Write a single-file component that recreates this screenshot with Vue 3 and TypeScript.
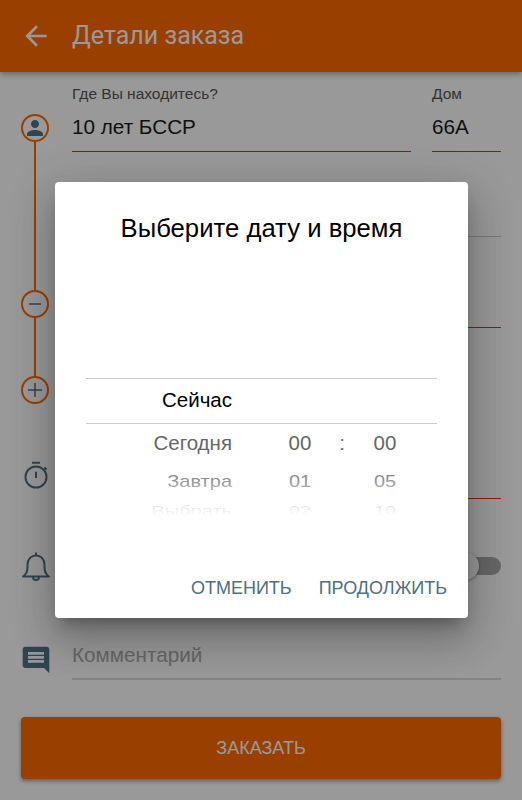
<template>
  <div class="page">
    <header class="app-bar">
      <svg class="back" viewBox="0 0 24 24" width="32" height="32">
        <path d="M20 11H7.830l5.590-5.590L12 4l-8 8 8 8 1.410-1.410L7.830 13H20z" fill="#fff" />
      </svg>
      <span class="bar-title">Детали заказа</span>
    </header>

    <section class="route">
      <div class="route-line">
        <span class="stop">
          <svg viewBox="0 0 24 24" width="24" height="24">
            <path d="M12 12c2.200 0 4-1.800 4-4s-1.800-4-4-4-4 1.800-4 4 1.800 4 4 4zm0 2c-2.700 0-8 1.300-8 4v2h16v-2c0-2.700-5.300-4-8-4z" fill="#4f7386" />
          </svg>
        </span>
        <span class="link link-long"></span>
        <span class="stop">
          <svg viewBox="0 0 24 24" width="24" height="24">
            <path d="M6 12h12" stroke="#4f7386" stroke-width="1.500" />
          </svg>
        </span>
        <span class="link link-short"></span>
        <span class="stop">
          <svg viewBox="0 0 24 24" width="24" height="24">
            <path d="M5 12h14M12 5v14" stroke="#4f7386" stroke-width="1.500" />
          </svg>
        </span>
      </div>
      <div class="route-fields">
        <div class="address-row">
          <label class="field street">
            <span class="field-label">Где Вы находитесь?</span>
            <span class="field-value">10 лет БССР</span>
          </label>
          <label class="field house">
            <span class="field-label">Дом</span>
            <span class="field-value">66А</span>
          </label>
        </div>
        <div class="blank-line plain first-blank"></div>
        <div class="blank-line red second-blank"></div>
        <div class="blank-line red third-blank"></div>
      </div>
    </section>

    <section class="option timer-row">
      <svg viewBox="0 0 24 24" width="32" height="32">
        <path d="M9 2h6M12 8.800v4.700" stroke="#4f7386" stroke-width="1.500" fill="none" />
        <circle cx="12" cy="12.750" r="7.900" stroke="#4f7386" stroke-width="1.500" fill="none" />
        <path d="M18.300 5.500l1.600 1.600" stroke="#4f7386" stroke-width="1.500" />
      </svg>
    </section>

    <section class="option bell-row">
      <svg viewBox="0 0 32 32" width="32" height="32">
        <path d="M3 26.500c3-2 4.500-4.500 4.500-9v-3c0-5 3.500-9 8.500-9s8.500 4 8.500 9v3c0 4.500 1.500 7 4.500 9z" stroke="#4f7386" stroke-width="2" fill="none" stroke-linejoin="round" />
        <path d="M13 27a3 3 0 0 0 6 0M16 2.500v3" stroke="#4f7386" stroke-width="2" fill="none" />
      </svg>
      <span class="switch"><span class="switch-thumb"></span></span>
    </section>

    <section class="option comment-row">
      <svg viewBox="0 0 24 24" width="32" height="32">
        <path d="M21.990 4c0-1.100-.89-2-1.990-2H4c-1.100 0-2 .9-2 2v12c0 1.100.9 2 2 2h14l4 4-.01-18zM18 14H6v-2h12v2zm0-3H6V9h12v2zm0-3H6V6h12v2z" fill="#4f7386" />
      </svg>
      <div class="comment-field">Комментарий</div>
    </section>

    <button class="order-btn" type="button">ЗАКАЗАТЬ</button>

    <div class="overlay">
      <div class="dialog">
        <h2 class="dialog-title">Выберите дату и время</h2>
        <div class="wheel">
          <div class="wheel-row selected">
            <span class="day">Сейчас</span>
          </div>
          <div
            class="wheel-row"
            v-for="(row, i) in rows"
            :key="row.day"
            :class="`step-${i}`"
          >
            <span class="day">{{ row.day }}</span>
            <span class="num">{{ row.hour }}</span>
            <span class="colon">{{ i === 0 ? ':' : '' }}</span>
            <span class="num">{{ row.minute }}</span>
          </div>
          <div class="wheel-fade"></div>
        </div>
        <div class="dialog-actions">
          <button class="text-btn" type="button">ОТМЕНИТЬ</button>
          <button class="text-btn" type="button">ПРОДОЛЖИТЬ</button>
        </div>
      </div>
    </div>
  </div>
</template>

<script setup lang="ts">
const rows = [
  { day: 'Сегодня', hour: '00', minute: '00' },
  { day: 'Завтра', hour: '01', minute: '05' },
  { day: 'Выбрать', hour: '02', minute: '10' },
];
</script>

<style>
body {
  background: #fff;
}
</style>

<style scoped>
.page {
  position: relative;
  width: 522px;
  height: 800px;
  overflow: hidden;
  background: #fff;
  font-family: "Liberation Sans", Arial, sans-serif;
  display: flex;
  flex-direction: column;
}

.app-bar {
  height: 72px;
  flex-shrink: 0;
  background: #ff6b00;
  display: flex;
  align-items: center;
  padding-left: 20px;
  gap: 20px;
  box-shadow: 0 2px 6px rgba(0, 0, 0, 0.35);
}

.bar-title {
  font-family: Roboto, sans-serif;
  font-size: 25px;
  line-height: 30px;
  margin-top: -1px;
  color: #fff;
}

.route {
  display: flex;
  padding: 0 21px;
  height: 360px;
  flex-shrink: 0;
}

.route-line {
  width: 28px;
  flex-shrink: 0;
  padding-top: 42px;
  display: flex;
  flex-direction: column;
  align-items: center;
}

.stop {
  width: 28px;
  height: 28px;
  flex-shrink: 0;
  box-sizing: border-box;
  border: 2.500px solid #ff6b00;
  border-radius: 50%;
  display: flex;
  align-items: center;
  justify-content: center;
}

.link {
  width: 2.500px;
  background: #ff6b00;
}

.link-long {
  height: 148px;
}

.link-short {
  height: 58px;
}

.route-fields {
  flex: 1;
  padding-left: 23px;
}

.address-row {
  display: flex;
  gap: 21px;
}

.field {
  display: flex;
  flex-direction: column;
  height: 80px;
  box-sizing: border-box;
  padding-top: 13px;
  border-bottom: 1px solid #f03000;
}

.street {
  flex: 1;
}

.house {
  width: 69px;
}

.field-label {
  font-size: 15.500px;
  color: #555;
  line-height: 18px;
}

.field-value {
  font-size: 20.700px;
  line-height: 24px;
  margin-top: 12px;
  color: #1a1a1a;
}

.blank-line {
  height: 1px;
}

.plain {
  background: #ccc;
}

.red {
  background: #f03000;
}

.first-blank {
  margin-top: 84px;
}

.second-blank {
  margin-top: 90px;
}

.third-blank {
  margin-top: 170px;
}

.option {
  display: flex;
  align-items: center;
  padding: 0 21px 0 20px;
  flex-shrink: 0;
}

.option svg {
  flex-shrink: 0;
}

.timer-row {
  height: 32px;
  margin-top: 28px;
}

.bell-row {
  height: 32px;
  margin-top: 58px;
  justify-content: space-between;
}

.switch {
  position: relative;
  width: 52px;
  height: 18px;
  border-radius: 9px;
  background: #aaa;
}

.switch-thumb {
  position: absolute;
  left: 2px;
  top: -5px;
  width: 28px;
  height: 28px;
  border-radius: 50%;
  background: #fff;
  box-shadow: 0 1px 3px rgba(0, 0, 0, 0.4);
}

.comment-row {
  margin-top: 62px;
  gap: 20px;
  height: 32px;
  align-items: flex-start;
}

.comment-field {
  flex: 1;
  height: 42px;
  box-sizing: border-box;
  margin-top: -6px;
  line-height: 34px;
  font-size: 20.700px;
  color: #aaa;
  border-bottom: 2px solid #ddd;
}

.order-btn {
  margin: 41px 21px 0;
  height: 62px;
  flex-shrink: 0;
  border: 0;
  border-radius: 4px;
  background: #ff6b00;
  color: #fff;
  font: 18px "Liberation Sans", Arial, sans-serif;
  box-shadow: 0 2px 4px rgba(0, 0, 0, 0.4);
}

.overlay {
  position: absolute;
  inset: 0;
  background: rgba(0, 0, 0, 0.4);
  z-index: 10;
}

.dialog {
  position: absolute;
  left: 55px;
  top: 182px;
  width: 413px;
  height: 436px;
  background: #fff;
  border-radius: 4px;
  display: flex;
  flex-direction: column;
  box-shadow: 0 11px 15px -7px rgba(0, 0, 0, 0.3), 0 24px 38px 3px rgba(0, 0, 0, 0.16), 0 9px 46px 8px rgba(0, 0, 0, 0.12);
}

.dialog-title {
  margin: 0;
  padding-top: 31px;
  text-align: center;
  font-weight: 400;
  font-size: 25.700px;
  line-height: 30px;
  color: #000;
}

.wheel {
  position: relative;
  margin: 135px 31px 0;
  height: 138px;
  overflow: hidden;
}

.wheel-row {
  display: grid;
  grid-template-columns: 194px 40px 44px 42px;
  align-items: center;
  height: 38px;
  font-size: 20.500px;
  color: #666;
}

.day {
  text-align: right;
  padding-right: 48px;
}

.num {
  text-align: center;
}

.colon {
  text-align: center;
}

.selected {
  height: 46px;
  box-sizing: border-box;
  padding-bottom: 3px;
  color: #000;
  border-top: 1px solid #ccc;
  border-bottom: 1px solid #ccc;
}

.step-1 {
  transform: scaleY(0.8);
  font-size: 20px;
  color: #777;
}

.step-2 {
  transform: scaleY(0.6);
  font-size: 20px;
  color: #888;
  margin-top: -8px;
}

.wheel-fade {
  position: absolute;
  left: 0;
  right: 0;
  bottom: 0;
  height: 46px;
  background: linear-gradient(rgba(255, 255, 255, 0), #fff);
}

.dialog-actions {
  margin-top: auto;
  display: flex;
  justify-content: flex-end;
  gap: 27px;
  padding: 0 21px 19px;
}

.text-btn {
  background: transparent;
  border: 0;
  padding: 0;
  height: 22px;
  font: 18px "Liberation Sans", Arial, sans-serif;
  color: #4f6f7f;
}
</style>
